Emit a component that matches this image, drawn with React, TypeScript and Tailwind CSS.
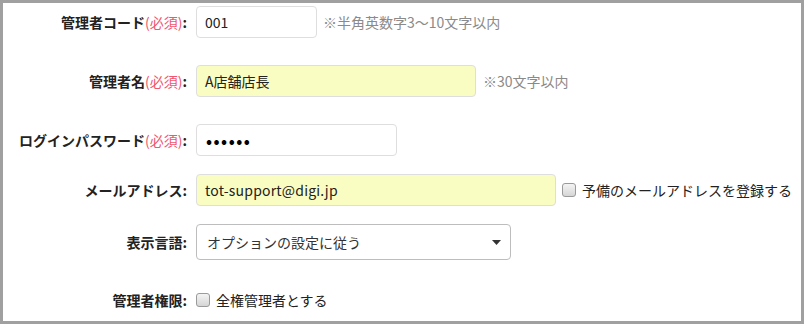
import React from "react";

const font = { fontFamily: '"Noto Sans CJK JP", "Noto Sans", sans-serif' };

function Label({ text, required }: { text: string; required?: boolean }) {
  return (
    <div className="w-[184px] shrink-0 text-right text-[14px] font-bold text-[#222] whitespace-nowrap">
      {text}
      {required && <span className="font-normal text-[#f0566e]">(必須)</span>}
      :
    </div>
  );
}

function Check() {
  return (
    <span className="inline-block w-[14px] h-[14px] shrink-0 rounded-[3px] border border-[#9a9a9a] bg-gradient-to-b from-[#f4f4f4] to-[#d6d6d6]" />
  );
}

export default function App() {
  return (
    <div style={font} className="w-[804px] h-[324px] border-[3px] border-[#a0a0a0] bg-white overflow-hidden">
      <div className="flex flex-col">
        <div className="flex items-center h-[32px] mt-[3px]">
          <Label text="管理者コード" required />
          <div className="ml-[9px] w-[121px] h-[32px] rounded-[4px] border border-[#dedede] bg-white flex items-center pl-[8px] text-[14px] text-[#222]">
            001
          </div>
          <span className="ml-[6px] text-[14px] text-[#8a8a8a]">※半角英数字3～10文字以内</span>
        </div>

        <div className="flex items-center h-[32px] mt-[27px]">
          <Label text="管理者名" required />
          <div className="ml-[9px] w-[280px] h-[32px] rounded-[4px] border border-[#dedede] bg-[#fafdc2] flex items-center pl-[8px] text-[14px] text-[#222]">
            A店舗店長
          </div>
          <span className="ml-[7px] text-[14px] text-[#8a8a8a]">※30文字以内</span>
        </div>

        <div className="flex items-center h-[32px] mt-[27px]">
          <Label text="ログインパスワード" required />
          <div className="ml-[9px] w-[201px] h-[32px] rounded-[4px] border border-[#dedede] bg-white flex items-center pl-[9px] text-[16px] font-bold text-black tracking-[1.5px]">
            ••••••
          </div>
        </div>

        <div className="flex items-center h-[32px] mt-[18px]">
          <Label text="メールアドレス" />
          <div className="ml-[9px] w-[360px] h-[32px] rounded-[4px] border border-[#dedede] bg-[#fafdc2] flex items-center pl-[8px] text-[14px] tracking-[0.2px] text-[#222]">
            tot-support@digi.jp
          </div>
          <div className="ml-[6px] flex items-center gap-[6px]">
            <Check />
            <span className="text-[14px] text-[#222]">予備のメールアドレスを登録する</span>
          </div>
        </div>

        <div className="flex items-center h-[36px] mt-[18px]">
          <Label text="表示言語" />
          <div className="ml-[9px] w-[315px] h-[36px] rounded-[4px] border border-[#bdbdbd] bg-white flex items-center justify-between pl-[10px] pr-[9px] text-[14px] text-[#333]">
            <span>オプションの設定に従う</span>
            <svg width="9" height="5" viewBox="0 0 9 5">
              <path d="M0 0 L9 0 L4.5 5 Z" fill="#333" />
            </svg>
          </div>
        </div>

        <div className="flex items-center h-[32px] mt-[24px]">
          <Label text="管理者権限" />
          <div className="ml-[9px] flex items-center gap-[6px]">
            <Check />
            <span className="text-[14px] text-[#222]">全権管理者とする</span>
          </div>
        </div>
      </div>
    </div>
  );
}
